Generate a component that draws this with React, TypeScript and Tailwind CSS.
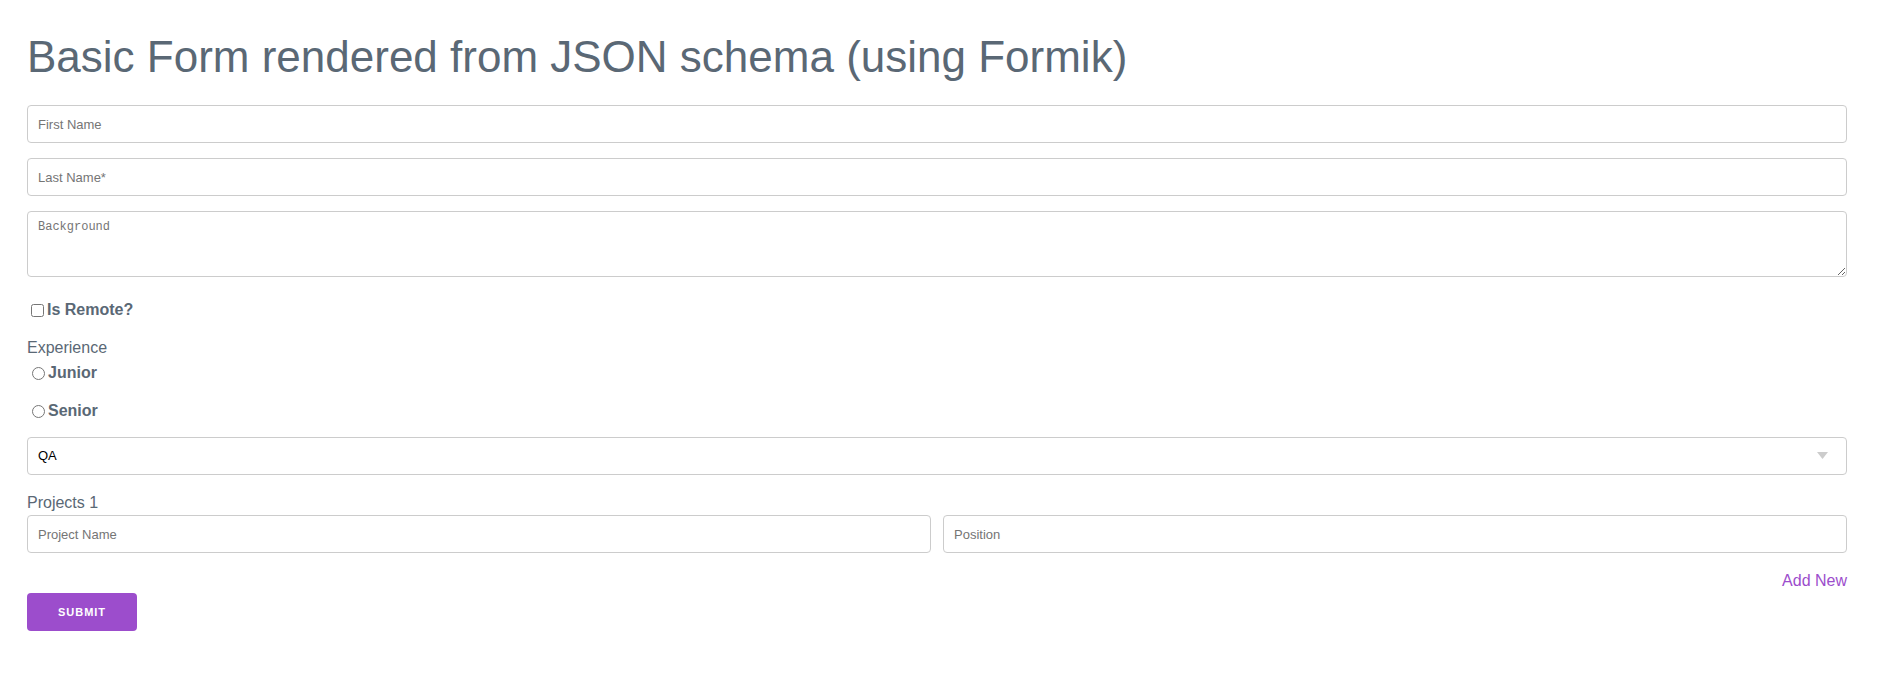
import { useState } from "react";

const inputClass =
  "block w-full h-[38px] border border-[#cccccc] rounded-[4px] pl-[10px] pr-[10px] text-[13px] text-black placeholder:text-[#757575] bg-white outline-none";

const App = () => {
  const [remote, setRemote] = useState(false);
  const [experience, setExperience] = useState("");
  const [role, setRole] = useState("QA");

  return (
    <div className="w-full bg-white pt-[35px] pb-[40px] pl-[27px] pr-[33px] font-['Liberation_Sans',Arial,sans-serif] text-[#5a6875]">
      <h1 className="text-[44px] leading-[44px] font-normal text-[#5a6875]">
        Basic Form rendered from JSON schema (using Formik)
      </h1>
      <form className="mt-[26px] flex flex-col" onSubmit={(e) => e.preventDefault()}>
        <input type="text" placeholder="First Name" className={inputClass} />
        <input type="text" placeholder="Last Name*" className={`${inputClass} mt-[15px]`} />
        <textarea
          placeholder="Background"
          className="mt-[15px] block w-full h-[66px] border border-[#cccccc] rounded-[4px] pl-[10px] pt-[6px] text-[12px] font-['Liberation_Mono',monospace] placeholder:text-[#757575] bg-white outline-none"
        />

        <label className="mt-[23px] flex items-center h-[20px] leading-[20px] text-[16px] font-bold">
          <input
            type="checkbox"
            checked={remote}
            onChange={() => setRemote(!remote)}
            className="ml-[4px] mr-[3px] w-[13px] h-[13px]"
          />
          Is Remote?
        </label>

        <div className="mt-[18px] h-[20px] leading-[20px] text-[16px]">Experience</div>
        {["Junior", "Senior"].map((level, index) => (
          <label
            key={level}
            className={`${index === 0 ? "mt-[5px]" : "mt-[18px]"} flex items-center h-[20px] leading-[20px] text-[16px] font-bold`}
          >
            <input
              type="radio"
              name="experience"
              checked={experience === level}
              onChange={() => setExperience(level)}
              className="ml-[5px] mr-[3px] w-[13px] h-[13px]"
            />
            {level}
          </label>
        ))}

        <div className="relative mt-[16px]">
          <select
            value={role}
            onChange={(e) => setRole(e.target.value)}
            className={`${inputClass} appearance-none`}
          >
            <option value="QA">QA</option>
            <option value="Developer">Developer</option>
            <option value="Designer">Designer</option>
          </select>
          <svg
            width="11"
            height="7"
            viewBox="0 0 11 7"
            className="absolute right-[19px] top-[15px] pointer-events-none"
          >
            <polygon points="0,0 11,0 5.5,7" fill="#cccccc" />
          </svg>
        </div>

        <div className="mt-[18px] h-[20px] leading-[20px] text-[16px]">Projects 1</div>
        <div className="mt-[2px] grid grid-cols-2 gap-[12px]">
          <input type="text" placeholder="Project Name" className={inputClass} />
          <input type="text" placeholder="Position" className={inputClass} />
        </div>

        <div className="mt-[18px] h-[20px] leading-[20px] text-[16px] text-right">
          <a href="#" className="text-[#9c4dcc]">
            Add New
          </a>
        </div>

        <div className="mt-[2px]">
          <button
            type="submit"
            className="w-[110px] h-[38px] rounded-[4px] bg-[#9c4dcc] text-white text-[11px] font-bold tracking-[1px]"
          >
            SUBMIT
          </button>
        </div>
      </form>
    </div>
  );
};

export default App;
